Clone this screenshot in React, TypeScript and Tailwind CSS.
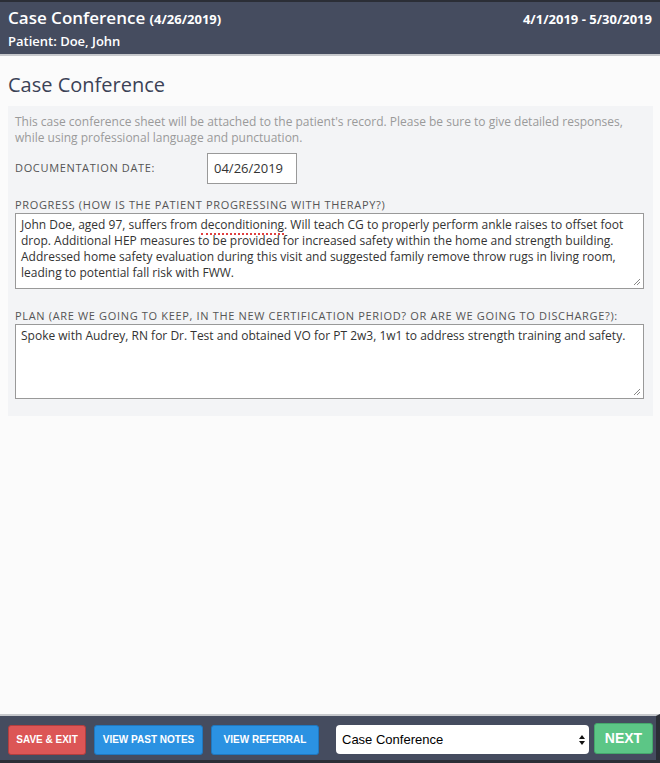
import React from 'react';

const ResizeGrip: React.FC = () => (
  <svg className="absolute right-[2px] bottom-[2px]" width="8" height="8" viewBox="0 0 8 8">
    <path d="M7 1 L1 7 M7 4 L4 7" stroke="#888" strokeWidth="1" />
  </svg>
);

export default function App() {
  return (
    <div className="h-screen flex flex-col bg-[#fbfbfb] font-['Open_Sans',sans-serif]">
      <header className="bg-[#454c5f] border-t-2 border-[#2b2e36] border-b-2 border-b-[#c6c8cc] px-2 pt-[5px] pb-[3px] text-white">
        <div className="flex justify-between items-baseline">
          <h1 className="text-[17px] font-semibold leading-[22px]">
            Case Conference <span className="text-[13px] font-bold">(4/26/2019)</span>
          </h1>
          <span className="text-[13px] font-bold">4/1/2019 - 5/30/2019</span>
        </div>
        <div className="text-[13px] font-semibold leading-[20px] mt-[1px]">Patient: Doe, John</div>
      </header>

      <main className="flex-1 px-2">
        <h2 className="text-[20px] text-[#3b4256] mt-[16px] mb-[8px] leading-[26px]">Case Conference</h2>
        <section className="bg-[#f3f4f6] px-[7px] pt-[8px] pb-[17px] mr-[-1px]">
          <p className="text-[12px] leading-[16px] text-[#9a9a9a]">
            This case conference sheet will be attached to the patient's record. Please be sure to give detailed responses, while using professional language and punctuation.
          </p>
          <div className="flex items-center mt-[7px]">
            <label className="w-[192px] text-[11px] tracking-[0.06em] text-[#555]">DOCUMENTATION DATE:</label>
            <div className="w-[90px] h-[31px] border border-[#999] bg-white text-[13px] text-[#333] flex items-center px-[6px]">04/26/2019</div>
          </div>

          <div className="mt-[14px] text-[11px] tracking-[0.06em] text-[#555] leading-[14px]">PROGRESS (HOW IS THE PATIENT PROGRESSING WITH THERAPY?)</div>
          <div className="relative mt-[1px] mr-[2px] h-[76px] border border-[#999] bg-white px-[5px] py-[3px] text-[12px] leading-[16px] text-[#333]">
            John Doe, aged 97, suffers from <span className="border-b-2 border-dotted border-[#e04040]">deconditioning</span>. Will teach CG to properly perform ankle raises to offset foot drop. Additional HEP measures to be provided for increased safety within the home and strength building. Addressed home safety evaluation during this visit and suggested family remove throw rugs in living room, leading to potential fall risk with FWW.
            <ResizeGrip />
          </div>

          <div className="mt-[20px] text-[11px] tracking-[0.06em] text-[#555] leading-[14px]">PLAN (ARE WE GOING TO KEEP, IN THE NEW CERTIFICATION PERIOD? OR ARE WE GOING TO DISCHARGE?):</div>
          <div className="relative mt-[1px] mr-[2px] h-[75px] border border-[#999] bg-white px-[5px] py-[3px] text-[12px] leading-[16px] text-[#333]">
            Spoke with Audrey, RN for Dr. Test and obtained VO for PT 2w3, 1w1 to address strength training and safety.
            <ResizeGrip />
          </div>
        </section>
      </main>

      <footer className="bg-[#454c5f] border-t-2 border-[#c6c8cc] border-r-4 border-r-[#2b2e36] border-b-[3px] border-b-[#2b2e36] pl-[8px] pr-[2px] pt-[7px] pb-[4px] flex items-center font-['Liberation_Sans',sans-serif]">
        <button className="w-[78px] h-[30px] rounded-[3px] bg-[#dc5656] border border-[#b33e3e] text-white text-[10px] font-bold">SAVE &amp; EXIT</button>
        <button className="ml-[8px] w-[109px] h-[30px] rounded-[3px] bg-[#2b92e2] border border-[#1f78c0] text-white text-[10px] font-bold">VIEW PAST NOTES</button>
        <button className="ml-[8px] w-[108px] h-[30px] rounded-[3px] bg-[#2b92e2] border border-[#1f78c0] text-white text-[10px] font-bold">VIEW REFERRAL</button>
        <div className="ml-[17px] w-[253px] h-[29px] rounded-[4px] bg-white flex items-center justify-between pl-[6px] pr-[3px] text-[13px] text-black">
          <span>Case Conference</span>
          <svg width="8" height="12" viewBox="0 0 8 12">
            <path d="M4 1 L7 5 H1 Z M4 11 L7 7 H1 Z" fill="#111" />
          </svg>
        </div>
        <button className="ml-[5px] w-[59px] h-[31px] mb-[2px] rounded-[3px] bg-[#5cc686] border border-[#45a86c] text-white text-[14px] font-bold">NEXT</button>
      </footer>
    </div>
  );
}
